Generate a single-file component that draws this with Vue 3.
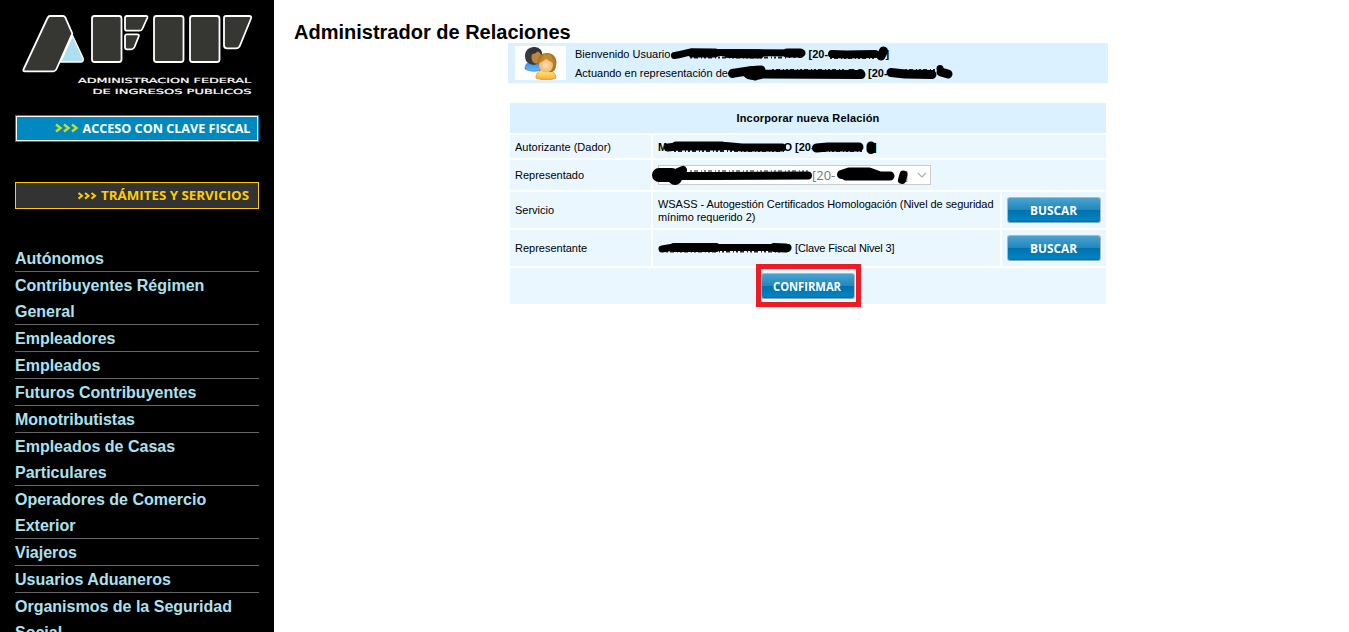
<script setup>
const menu = [
  'Autónomos',
  'Contribuyentes Régimen General',
  'Empleadores',
  'Empleados',
  'Futuros Contribuyentes',
  'Monotributistas',
  'Empleados de Casas Particulares',
  'Operadores de Comercio Exterior',
  'Viajeros',
  'Usuarios Aduaneros',
  'Organismos de la Seguridad Social',
]
</script>

<template>
  <div class="page">
    <aside class="sidebar">
      <svg class="logo" width="274" height="110" viewBox="0 0 274 110">
        <path class="sky" d="M72.500 35.500 L83 58 Q84 62 80.500 62 H60.500 Z" />
        <g class="plate">
          <path d="M50 16 H63 Q64.500 16 65.300 17.500 L72.300 33.500 L56.500 69 Q55.500 71.300 53.500 71.300 H25 Q22.500 71.300 23.700 69 L47.500 18 Q48.500 16 50 16 Z" />
          <rect x="92" y="16" width="29.500" height="46" rx="2.500" />
          <path d="M127 16 H146 Q148 16 147.300 18 L142.300 29 Q141.500 30.700 139.500 30.700 H127 Q125 30.700 125 28.700 V18 Q125 16 127 16 Z" />
          <path d="M127 34.300 H137 Q139.500 34.300 138.700 36.500 L134.500 47 Q133.500 49.300 131.500 49.300 H127 Q125 49.300 125 47.300 V36.300 Q125 34.300 127 34.300 Z" />
          <rect x="154" y="16" width="29.500" height="46" rx="2.500" />
          <rect x="190" y="16" width="29.500" height="46" rx="2.500" />
          <path d="M226 16 H249 Q252 16 251 18.500 L240 45.500 Q239 48.300 236 48.300 H227 Q224 48.300 224 45.300 V18 Q224 16 226 16 Z" />
        </g>
        <text class="tiny" x="78" y="83" textLength="173" lengthAdjust="spacingAndGlyphs">ADMINISTRACION FEDERAL</text>
        <text class="tiny" x="92.500" y="94" textLength="159" lengthAdjust="spacingAndGlyphs">DE INGRESOS PUBLICOS</text>
      </svg>

      <svg class="banner access" width="244" height="27" viewBox="0 0 244 27">
        <rect width="244" height="27" fill="#0089c0" />
        <rect x="1.500" y="1.500" width="241" height="24" fill="none" stroke="#fff" />
        <path d="M41 9.500 L45.500 13 L41 16.500 M49 9.500 L53.500 13 L49 16.500 M57 9.500 L61.500 13 L57 16.500" fill="none" stroke="#c6da2c" stroke-width="2.500" />
        <text x="67.500" y="17.500" fill="#fff" textLength="168" lengthAdjust="spacingAndGlyphs">ACCESO CON CLAVE FISCAL</text>
      </svg>
      <svg class="banner services" width="244" height="27" viewBox="0 0 244 27">
        <rect x=".5" y=".5" width="243" height="26" fill="#333" stroke="#fc0" />
        <path d="M63.500 11 L67 13.800 L63.500 16.600 M70 11 L73.500 13.800 L70 16.600 M76.500 11 L80 13.800 L76.500 16.600" fill="none" stroke="#fc0" stroke-width="2" />
        <text x="86" y="18" fill="#fc0" textLength="148" lengthAdjust="spacingAndGlyphs">TRÁMITES Y SERVICIOS</text>
      </svg>

      <ul class="menu">
        <li v-for="item in menu" :key="item">{{ item }}</li>
      </ul>
    </aside>

    <main class="content">
      <h1>Administrador de Relaciones</h1>

      <section class="welcome">
        <div class="avatar">
          <svg width="34" height="34" viewBox="0 0 34 34">
            <defs>
              <linearGradient id="blue" x1="0" y1="0" x2="0" y2="1"><stop offset="0" stop-color="#3a8fdb" /><stop offset="1" stop-color="#69b8f5" /></linearGradient>
              <linearGradient id="gold" x1="0" y1="0" x2="0" y2="1"><stop offset="0" stop-color="#fff07c" /><stop offset="1" stop-color="#f8a934" /></linearGradient>
              <radialGradient id="skin"><stop offset="0" stop-color="#ffe0b4" /><stop offset="1" stop-color="#f0b56e" /></radialGradient>
              <radialGradient id="hair"><stop offset="0" stop-color="#d2a14a" /><stop offset="1" stop-color="#a87319" /></radialGradient>
            </defs>
            <path d="M1 23 C1 17 5 15 11 16 C16 17 18 20 17 24 Q8 27 1 23Z" fill="url(#blue)" stroke="#2a6db0" stroke-width=".6" />
            <path d="M2 15 C-1 7 3 1 10 1 C16 1 19 5 18 12 L15 17 C11 20 5 19 2 15Z" fill="#393b3e" />
            <ellipse cx="12.500" cy="11.500" rx="5" ry="6.200" fill="#b98543" />
            <path d="M7 8 C10 8 13 7 14 4 L18 9 L17 4 L10 1 L4 5Z" fill="#303236" />
            <path d="M12 32 C12 26 16 24 22 24 C29 24 32 28 32 32 Q22 36 12 32Z" fill="url(#gold)" stroke="#d98a22" stroke-width=".7" />
            <path d="M15 20 C12 11 17 7 23 7 C30 7 34 13 32 20 Q31 27 25 26 Z" fill="url(#hair)" />
            <ellipse cx="22" cy="19.500" rx="7" ry="7" fill="url(#skin)" />
            <path d="M15 17 C18 16 20 14.500 22 12.500 Q25 15 29 17 L27 9 L20 8Z" fill="#bd8b32" />
          </svg>
        </div>
        <div class="lines">
          <p>Bienvenido Usuario</p>
          <p>Actuando en representación de</p>
        </div>
      </section>

      <section class="relation">
        <div class="cell head span3">Incorporar nueva Relación</div>

        <div class="cell low">Autorizante (Dador)</div>
        <div class="cell span2"></div>

        <div class="cell">Representado</div>
        <div class="cell span2">
          <div class="select">
            <svg width="10" height="6" viewBox="0 0 10 6"><path d="M.8 .8 L5 5 L9.200 .8" fill="none" stroke="#aaa" stroke-width="1.200" /></svg>
          </div>
        </div>

        <div class="cell">Servicio</div>
        <div class="cell low service">WSASS - Autogestión Certificados Homologación (Nivel de seguridad mínimo requerido 2)</div>
        <div class="cell action">
          <button class="btn"><svg width="92" height="24"><text x="22" y="16.500" textLength="47" lengthAdjust="spacingAndGlyphs">BUSCAR</text></svg></button>
        </div>

        <div class="cell">Representante</div>
        <div class="cell level"><span>[Clave Fiscal Nivel 3]</span></div>
        <div class="cell action">
          <button class="btn"><svg width="92" height="24"><text x="22" y="16.500" textLength="47" lengthAdjust="spacingAndGlyphs">BUSCAR</text></svg></button>
        </div>

        <div class="cell span3 footer">
          <div class="highlight">
            <button class="btn"><svg width="92" height="24"><text x="11" y="16.500" textLength="68" lengthAdjust="spacingAndGlyphs">CONFIRMAR</text></svg></button>
          </div>
        </div>
      </section>
    </main>

    <!-- Hand-drawn marks hiding personal data -->
    <svg class="redaction" width="1349" height="632" viewBox="0 0 1349 632">
      <g class="bits">
        <text x="788" y="58">RO</text>
        <text x="808.500" y="58">[20-</text>
        <text x="885.500" y="58">]</text>
        <text x="848" y="77">RO</text>
        <text x="868" y="77">[20-</text>
        <text x="658" y="151">M</text>
        <text x="783.500" y="151">O</text>
        <text x="795" y="151">[20-</text>
        <text x="873" y="151">]</text>
        <text class="plain" x="783" y="252">O</text>
      </g>
      <g class="option">
        <text x="812" y="180">[20-</text>
        <text x="904" y="180">]</text>
      </g>
      <g class="residue">
        <path d="M690 57.500 H787 M830 58 H876 M772 70 H846 M905 70 H935 M674 151 H784 M818 151 H862 M666 251.500 H782" />
        <path class="soft" d="M690 171 H808" />
      </g>
      <g class="ink">
        <path stroke-width="7" d="M674.500 55.500 C682 55 684 53 691 52 L713 52.500 L802 53" />
        <path stroke-width="9" d="M692 53 L715 53 M728 53.500 L760 54 M787 53 H800" />
        <path stroke-width="8" d="M832 54 L846 54.500 L875 54" />
        <path stroke-width="9" d="M883.500 51 L881 56" />
        <path stroke-width="9" d="M732.500 73.500 C747 71 752 70 761 70 L755 76 L748 74 L861 74.500" />
        <path stroke-width="13" d="M750 73 L759 73" />
        <path stroke-width="9" d="M891 72.500 L905 74 L932 74.500" />
        <circle cx="940" cy="68.500" r="3.500" /><path stroke-width="9" d="M941 72 L948 74" />
        <path stroke-width="8" d="M668 147.500 L681 146 L726 146 L742 147.500 L782 147.500" />
        <path stroke-width="9" d="M676 146 L722 146" />
        <path stroke-width="9" d="M816.500 148 L828 147 L859 147" />
        <path stroke-width="9" d="M871 146 V149.500" />
        <path stroke-width="14" d="M659 175 L672 175 L675 178" />
        <path stroke-width="8" d="M678 172 L683 170 M678 176 L715 176 L808 175.500" />
        <path stroke-width="9" d="M841.500 174.500 L849 172 L869 172 L880 176 L890 176 L846 176" />
        <path stroke-width="8" d="M903.500 174.500 L902 180" />
        <path stroke-width="7" d="M662 249 L674 247 L720 247.500 L788 247.500" />
        <path stroke-width="9" d="M674 247.500 L716 247.500 M774 247.500 L786 248" />
      </g>
    </svg>
  </div>
</template>

<style>
body { margin: 0; overflow: hidden; }
</style>

<style scoped>
.page {
  position: relative;
  display: flex;
  width: 1349px;
  height: 632px;
  overflow: hidden;
  background: #fff;
  font-family: "Liberation Sans", Arial, sans-serif;
  color: #000;
}
.sidebar { width: 274px; flex: none; background: #000; }
.sidebar svg { display: block; }
.plate > * { fill: #363733; stroke: #fff; stroke-width: 1.8; }
.sky { fill: #addff0; stroke: #fff; stroke-width: 1.5; }
.tiny { font: 7px "DejaVu Sans", sans-serif; fill: #fff; stroke: #fff; stroke-width: .2; }
.banner { margin-left: 15px; font: bold 12.5px "Open Sans", "Noto Sans", sans-serif; }
.access { margin-top: 5px; }
.services { margin-top: 40px; }
.menu {
  margin: 36px 15px 0;
  padding: 0;
  list-style: none;
  color: #ade0f0;
  font-size: 16px;
  font-weight: bold;
  line-height: 26px;
}
.menu li { padding-top: 1px; box-shadow: inset 0 -1px #666; }

.content { flex: 1; }
h1 {
  box-sizing: border-box;
  margin: 20px 0 0 20px;
  padding-top: 1px;
  height: 23px;
  font-size: 20px;
  line-height: 23px;
  white-space: nowrap;
}
.welcome {
  display: flex;
  align-items: center;
  width: 600px;
  height: 40px;
  margin-left: 234px;
  background: #dbf1ff;
}
.avatar {
  display: flex;
  justify-content: center;
  width: 51px;
  height: 34px;
  margin-left: 7px;
  background: #fff;
}
.lines { margin-left: 9px; padding-top: 2px; font-size: 11px; line-height: 19px; }
.lines p { margin: 0; }
.relation {
  display: grid;
  grid-template-columns: 141px 347px 104px;
  grid-template-rows: 30px 23px 30px 36px 36px 36px;
  gap: 2px;
  width: 596px;
  margin: 20px 0 0 236px;
  font-size: 11px;
  line-height: 13px;
}
.cell {
  display: flex;
  align-items: center;
  box-sizing: border-box;
  padding: 0 5px;
  background: #eaf7ff;
}
.head { justify-content: center; background: #dbf1ff; font-weight: bold; letter-spacing: .17px; }
.low { padding-top: 2px; }
.service { letter-spacing: -.06px; }
.span2 { grid-column: span 2; }
.span3 { grid-column: span 3; }
.level span { margin-left: 137px; letter-spacing: -.15px; }
.select {
  display: flex;
  align-items: center;
  justify-content: flex-end;
  box-sizing: border-box;
  width: 273px;
  height: 20px;
  padding-right: 3px;
  border: 1px solid #ccc;
  background: #fff;
}
.btn {
  display: block;
  width: 94px;
  height: 26px;
  padding: 0;
  border: 1px solid #a9bac4;
  border-bottom-color: #86a9bc;
  border-radius: 3px;
  background: linear-gradient(#4ba3ce 0, #2288bd 48%, #0071ae 52%, #0083c3 90%, #0071ae 100%);
}
.btn svg { display: block; font: bold 11.5px "Open Sans", "Noto Sans", sans-serif; fill: #fff; }
.footer { justify-content: center; }
.highlight {
  flex: none;
  box-sizing: border-box;
  width: 105px;
  height: 43px;
  margin: -5px 0 -4px 1px;
  padding: 4px 0 0;
  border: 5px solid #ed1c24;
}
.redaction { position: absolute; left: 0; top: 0; pointer-events: none; }
.bits { font-size: 11px; font-weight: bold; }
.plain { font-weight: normal; }
.option { font: 13px "Open Sans", sans-serif; fill: #777; }
.residue path { fill: none; stroke: #223; stroke-width: 2; stroke-dasharray: 2 2 4 3 1 2; }
.residue .soft { stroke: #888; }
.ink path { fill: none; stroke: #000; stroke-linecap: round; stroke-linejoin: round; }
</style>
